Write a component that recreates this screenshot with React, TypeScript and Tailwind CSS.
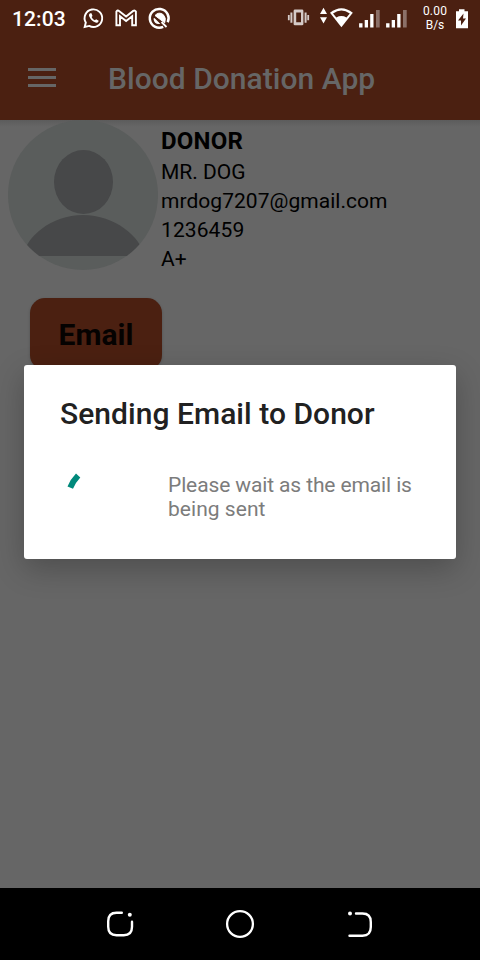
import React from "react";

function StatusBar() {
  return (
    <div className="flex h-9 shrink-0 items-center text-white">
      <span className="mt-[2px] ml-3 w-[70px] whitespace-nowrap text-[21px] leading-9 font-medium tracking-[0.1px]">12:03</span>
      <svg className="h-9 w-[98px] shrink-0" viewBox="82 0 98 36" fill="none" stroke="#fff">
        <path d="M85.8 22.6a8.8 8.8 0 1 1 3.400 3.300L84.700 27Z" strokeWidth="1.9" />
        <path d="M90.300 13.200c-1.200.4-1.700 2-.9 3.600 1.100 2.600 3.200 4.800 6.100 5.800 1.500.5 3-.4 3.200-1.900l-2.600-1.500-1.200 1.100c-1.400-.6-2.700-1.800-3.300-3.300l.9-1.100-1-2.600Z" fill="#fff" stroke="none" />
        <path d="M116.400 25.200V11.600q1.200-1.800 2.600-.7l7.100 5.600 7.100-5.600q1.600-1 2.700.7v13.600h-3.700v-9l-6.100 4.900-6.100-4.900v9Z" strokeWidth="1.9" />
        <path d="M163.200 26.800a9.400 9.400 0 1 1 4.500-4.500" strokeWidth="2.500" />
        <path d="M155 15.500q3.800-4.200 8.200-.9 3.400 3.300 1.500 8.200Z" fill="#fff" stroke="#fff" strokeWidth="1" />
        <path d="m154 18.500 5 5q-4.300.1-5-5" fill="#fff" strokeWidth="1.200" />
        <path d="m161.500 22 5 5" strokeWidth="1.800" />
      </svg>
      <svg className="ml-[104px] h-9 w-[130px] shrink-0" viewBox="284 0 130 36" fill="#fff">
        <g fill="#d5cac7">
          <path fillRule="evenodd" d="M295 9.500h7q1.400 0 1.400 1.400v13q0 1.400-1.400 1.400h-7q-1.400 0-1.400-1.400v-13q0-1.400 1.400-1.400m1.200 3v9.800h4.800v-9.800Z" />
          <path d="M290.400 12.500h2v10.300h-2zM304.600 12.500h2v10.300h-2zM287.900 15h1.800v5.200h-1.800zM307.300 15h1.800v5.200h-1.800z" />
        </g>
        <path d="m320 14 3.500-6.200L327 14zM320 17.200h7l-3.500 6.300z" />
        <path d="M330 12.800q11.400-9.200 22.800 0L341.400 27.200Z" />
        <path d="M333 13.400q8.400-5.700 16.800 0l-3.300 4.100q-5.100-2.900-10.200 0Z" fill="#4b2011" />
        <path d="M359.100 23.200h3.400v4.200h-3.400zM364.700 20h3.300v7.400h-3.300zM370.200 14h3.300v13.400h-3.300zM386.100 23.200h3.400v4.200h-3.400zM391.700 20h3.300v7.400h-3.300zM397.200 14h3.300v13.400h-3.300z" />
        <path d="M376 10h3.700v17.400H376zM403 10h3.700v17.400H403z" fill="#8b7068" />
      </svg>
      <div className="ml-[4px] w-[34px] text-center text-[12px] leading-[14px] whitespace-nowrap">
        <div className="tracking-[0.2px]">0.00</div>
        <div>B/s</div>
      </div>
      <svg className="ml-[3px] h-9 w-[14px] shrink-0" viewBox="455 0 14 36">
        <path d="M459 9.200h5.500v2h3.500v17h-12v-17h3Z" fill="#fff" />
        <path d="M463.500 13.500 458 20.500h3v5l5-7h-3Z" fill="#4b2011" />
      </svg>
    </div>
  );
}

function Header() {
  return (
    <header className="flex h-[84px] shrink-0 items-center pl-7 text-[#666]">
      <div className="mb-px flex w-7 flex-col gap-[5px]">
        <i className="h-[3px] bg-current" />
        <i className="h-[3px] bg-current" />
        <i className="h-[3px] bg-current" />
      </div>
      <h1 className="mt-[2px] ml-[52px] text-[30px] leading-[42px] font-medium tracking-[0.03px] whitespace-nowrap">Blood Donation App</h1>
    </header>
  );
}

function Avatar() {
  return (
    <svg className="ml-2 size-[150px] shrink-0" viewBox="8 120 150 150">
      <defs>
        <clipPath id="disc">
          <circle cx="83" cy="195" r="75" />
        </clipPath>
      </defs>
      <circle cx="83" cy="195" r="75" fill="#5a5d5c" />
      <g clipPath="url(#disc)" fill="#474849">
        <ellipse cx="83.500" cy="182" rx="29.500" ry="32" />
        <path d="M23 256c3-19 28-41 60-41s58 22 61 41Z" />
      </g>
    </svg>
  );
}

function ProgressDialog() {
  return (
    <div className="absolute top-[365px] left-6 flex h-[194px] w-[432px] flex-col rounded-[3px] bg-white pl-9 shadow-[0_10px_30px_rgba(0,0,0,0.24)]">
      <h2 className="mt-[28px] text-[30px] leading-[42px] font-medium tracking-[0.04px] whitespace-nowrap text-[#212121]">Sending Email to Donor</h2>
      <div className="mt-[32px] flex">
        <svg className="h-[60px] w-[108px] shrink-0" viewBox="60 467 108 60" fill="#00897b">
          <path d="M76 473.500 80.300 477.500Q75.600 482.500 73 488.800L67.500 486.500Q70.500 479 76 473.500Z" />
        </svg>
        <p className="mt-[6px] text-[21px] leading-6 whitespace-nowrap text-[#7c7c7c]">
          <span className="tracking-[-0.12px]">Please wait as the email is</span>
          <br />
          <span className="tracking-[0.04px]">being sent</span>
        </p>
      </div>
    </div>
  );
}

function NavigationBar() {
  return (
    <nav className="flex h-[72px] shrink-0 items-center justify-between bg-black px-[105px]">
      <svg className="size-[30px]" viewBox="105 909 30 30" fill="none" stroke="#fff" strokeWidth="2.400" strokeLinecap="round">
        <path d="M121.800 912.800h-5.300q-8.300 0-8.300 8.500v5.500q0 8.500 8.300 8.500h7.300q8.200 0 8.200-8.500v-5" />
        <circle cx="129.800" cy="914.700" r="2" fill="#fff" stroke="none" />
      </svg>
      <svg className="size-[30px]" viewBox="225 909 30 30" fill="none" stroke="#fff" strokeWidth="2.300">
        <circle cx="240" cy="924" r="12.900" />
      </svg>
      <svg className="size-[30px]" viewBox="345 909 30 30" fill="none" stroke="#fff" strokeWidth="2.400" strokeLinecap="round">
        <path d="M356 913.500h6.500q8.300 0 8.300 8.500v5q0 8.700-8.300 8.700H349.500" />
        <circle cx="350" cy="913.500" r="2" fill="#fff" stroke="none" />
      </svg>
    </nav>
  );
}

export default function App() {
  return (
    <div className="relative flex h-[960px] w-[480px] flex-col overflow-hidden bg-[#666] font-[Roboto,sans-serif]">
      <div className="z-0 flex h-[120px] shrink-0 flex-col bg-[#4b2011]">
        <StatusBar />
        <Header />
      </div>
      <main className="flex flex-1 flex-col bg-[linear-gradient(to_bottom,#5c5c5c,#666_7px)]">
        <section className="flex h-[150px]">
          <Avatar />
          <div className="ml-[3px] flex flex-col text-[21px] leading-[29px] whitespace-nowrap text-black">
            <strong className="mt-[6px] mb-[2px] text-[24px] leading-[30px] font-bold tracking-[0.2px]">DONOR</strong>
            <span>MR. DOG</span>
            <span className="tracking-[0.04px]">mrdog7207@gmail.com</span>
            <span className="tracking-[0.1px]">1236459</span>
            <span>A+</span>
          </div>
        </section>
        <button className="mt-[28px] ml-[30px] h-[72px] w-[132px] rounded-[15px] bg-[#4b2011] pt-px text-[30px] font-bold text-[#050201] shadow-[0_1px_3px_rgba(0,0,0,0.2)]">
          Email
        </button>
      </main>
      <NavigationBar />
      <ProgressDialog />
    </div>
  );
}
